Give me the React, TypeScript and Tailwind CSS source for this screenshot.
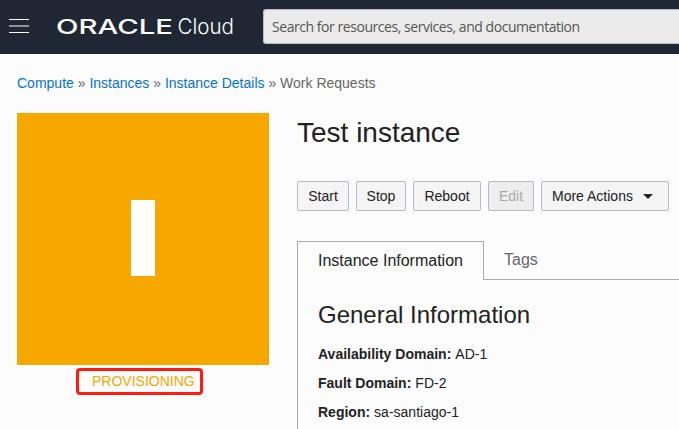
import React from "react";

const buttonBase = "h-[30px] rounded-[2px] border border-[#b4bbc5] text-center text-[14px] leading-[28px]";

const details = [
  { label: "Availability Domain:", value: "AD-1" },
  { label: "Fault Domain:", value: "FD-2" },
  { label: "Region:", value: "sa-santiago-1" },
];

function Header() {
  return (
    <header className="flex h-[54px] bg-[#1e2733]">
      <div className="ml-[9px] mt-[19px] flex h-[14px] w-5 shrink-0 flex-col justify-between">
        <span className="h-px bg-white" />
        <span className="h-[2px] bg-[#8e9399]" />
        <span className="h-px bg-white" />
      </div>
      <svg className="ml-6 h-[54px] w-[188px] shrink-0" viewBox="-4 0 188 54" fill="#fff">
        <text x="-1" y="34" fontFamily="Inter, sans-serif" fontWeight="500" fontSize="20.5" textLength="117" lengthAdjust="spacingAndGlyphs">ORACLE</text>
        <text x="120.5" y="34" fontFamily="Inter, sans-serif" fontWeight="300" fontSize="21.5" textLength="56.5" lengthAdjust="spacingAndGlyphs">Cloud</text>
      </svg>
      <div className="ml-[22px] mt-[9px] h-[35px] grow rounded-l-[3px] border border-r-0 border-[#b4bbc5] bg-[#ebebeb] pl-2 font-['Open_Sans',sans-serif] text-[14px] leading-[34px] tracking-[-0.45px] whitespace-nowrap text-[#555]">
        Search for resources, services, and documentation
      </div>
    </header>
  );
}

export default function App() {
  return (
    <div className="h-[429px] w-[679px] overflow-hidden bg-[#fcfcfc] font-['Liberation_Sans',Arial,sans-serif] text-[#222]">
      <Header />
      <nav className="mt-5 flex h-[18px] gap-[3.9px] pl-[17px] text-[14px] leading-[18px] whitespace-nowrap text-[#666]">
        <a className="text-[#0572ce]">Compute</a>
        <span>»</span>
        <a className="text-[#0572ce]">Instances</a>
        <span>»</span>
        <a className="text-[#0572ce]">Instance Details</a>
        <span>»</span>
        <span>Work Requests</span>
      </nav>
      <main className="mt-[21px] flex pl-[17px]">
        <aside className="w-[252px] shrink-0">
          <div className="flex h-[252px] items-center justify-center bg-[#f6a800]">
            <div className="mt-[-2px] h-[76px] w-[24px] bg-white" />
          </div>
          <div className="ml-[59px] mt-[3px] h-[27px] w-[127px] rounded-[4px] border-[3px] border-[#fc1c10] pl-[13px] text-[14px] leading-[20px] text-[#f6a800]">
            PROVISIONING
          </div>
        </aside>
        <section className="ml-[28px] grow">
          <h1 className="h-[68px] pt-[4px] text-[28px] leading-[32px]">Test instance</h1>
          <div className="flex gap-[7px]">
            <button className={buttonBase + " w-[52px] bg-[#f5f5f5]"}>Start</button>
            <button className={buttonBase + " w-[50px] bg-[#f5f5f5]"}>Stop</button>
            <button className={buttonBase + " w-[68px] bg-[#f5f5f5]"}>Reboot</button>
            <button className={buttonBase + " w-[46px] bg-[#eeeeee] text-[#aaa]"}>Edit</button>
            <button className={buttonBase + " flex w-[128px] items-center bg-[#f5f5f5] pl-[10px]"}>
              More Actions
              <svg className="ml-[10px] h-[5px] w-[10px]" viewBox="0 0 10 5">
                <path d="M0 0h10L5 5z" fill="#222" />
              </svg>
            </button>
          </div>
          <div className="mt-[30px] flex h-[39px] text-[16px] leading-[38px]">
            <div className="w-[187px] border border-b-0 border-[#aaa] pl-5">Instance Information</div>
            <div className="grow border-b border-[#aaa] pl-5 text-[#666]">Tags</div>
          </div>
          <div className="h-[200px] border-l border-[#aaa] pl-5 pt-[20px]">
            <h2 className="text-[24px] leading-[30px]">General Information</h2>
            <dl className="mt-[10px] text-[14px] leading-[29px]">
              {details.map((d) => (
                <div key={d.label} className="flex gap-1">
                  <dt className="font-bold">{d.label}</dt>
                  <dd>{d.value}</dd>
                </div>
              ))}
            </dl>
          </div>
        </section>
      </main>
    </div>
  );
}
